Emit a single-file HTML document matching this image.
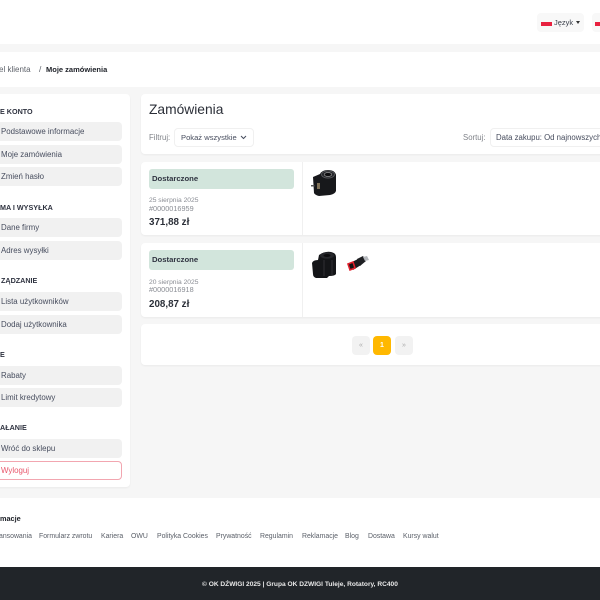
<!DOCTYPE html>
<html lang="pl">
<head>
<meta charset="utf-8">
<title>Zamówienia</title>
<style>
html,body{margin:0;padding:0;width:600px;height:600px;overflow:hidden;background:#f6f6f6;font-family:"Liberation Sans","DejaVu Sans",sans-serif;color:#2b2f38}
.a{position:absolute;box-sizing:border-box}
.t{position:absolute;white-space:nowrap;line-height:1}
.w{background:#fff}
.card{position:absolute;background:#fff;border-radius:4px;box-shadow:0 1px 2px rgba(0,0,0,.05)}
.item{position:absolute;box-sizing:border-box;left:-8px;width:130px;height:19px;background:#f1f1f1;border-radius:4px;font-size:7.9px;line-height:19px;padding-left:9px;color:#474d5e;white-space:nowrap}
.h{position:absolute;white-space:nowrap;font-size:7.2px;font-weight:bold;color:#2f3340;line-height:1}
.f{position:absolute;top:534px;font-size:6.9px;line-height:1;color:#5a5f68;white-space:nowrap}
.status{position:absolute;left:149px;width:145px;height:20px;background:#d2e5dc;border-radius:3px;font-size:7.7px;font-weight:bold;line-height:20px;padding-left:3px;color:#2f3340;box-sizing:border-box}
.g{position:absolute;left:149px;font-size:6.7px;color:#8a8d94;line-height:1;white-space:nowrap}
.n{font-size:7.3px}
.p{position:absolute;left:149px;font-size:9.8px;font-weight:bold;color:#2b2f38;line-height:1;white-space:nowrap}
.box{position:absolute;background:#fff;border:1px solid #f0f0f0;border-radius:4px;box-sizing:border-box;color:#474d5e;white-space:nowrap}
.pg{position:absolute;top:336px;width:18px;height:19px;border-radius:4px;background:#f2f2f2;color:#aaa;font-size:7px;line-height:19px;text-align:center}
.flag{position:absolute;width:11px;height:4px;background:#e8213f}
.lang{position:absolute;top:13px;height:19px;background:#f8f8f8;border-radius:4px}
svg{filter:blur(.3px)}
</style>
</head>
<body>
<!-- header -->
<div class="a w" style="left:0;top:0;width:600px;height:44px"></div>
<div class="lang" style="left:537px;width:47px"></div>
<div class="flag" style="left:541px;top:22px"></div>
<div class="t" style="left:554px;top:19px;font-size:7.5px;color:#3a3f4a">Język</div>
<div class="a" style="left:576px;top:21px;width:0;height:0;border-left:2.5px solid transparent;border-right:2.5px solid transparent;border-top:3px solid #333"></div>
<div class="lang" style="left:592px;width:20px"></div>
<div class="flag" style="left:595px;top:22px"></div>

<!-- breadcrumb -->
<div class="a w" style="left:0;top:52px;width:600px;height:35px"></div>
<div class="t" style="left:-1px;top:66px;font-size:8px;color:#5f636b">el klienta</div>
<div class="t" style="left:39px;top:65px;font-size:8.4px;color:#5f636b">/</div>
<div class="t" style="left:46px;top:65.5px;font-size:7.5px;font-weight:bold;color:#20232a">Moje zamówienia</div>

<!-- sidebar -->
<div class="card" style="left:-8px;top:94px;width:138px;height:393px"></div>
<div class="h" style="left:0;top:108px">E KONTO</div>
<div class="item" style="top:122px">Podstawowe informacje</div>
<div class="item" style="top:145px">Moje zamówienia</div>
<div class="item" style="top:167px">Zmień hasło</div>
<div class="h" style="left:0;top:204px">MA I WYSYŁKA</div>
<div class="item" style="top:218px">Dane firmy</div>
<div class="item" style="top:241px">Adres wysyłki</div>
<div class="h" style="left:1px;top:277px">ZĄDZANIE</div>
<div class="item" style="top:292px">Lista użytkowników</div>
<div class="item" style="top:315px">Dodaj użytkownika</div>
<div class="h" style="left:0;top:351px">E</div>
<div class="item" style="top:366px">Rabaty</div>
<div class="item" style="top:388px">Limit kredytowy</div>
<div class="h" style="left:0;top:424px">AŁANIE</div>
<div class="item" style="top:439px">Wróć do sklepu</div>
<div class="item" style="top:461px;background:#fff;border:1px solid #f2a6b0;color:#e8566b;line-height:17px;padding-left:8px">Wyloguj</div>

<!-- title card -->
<div class="card" style="left:141px;top:94px;width:470px;height:60px"></div>
<div class="t" style="left:149px;top:103px;font-size:13.8px;color:#2b2f38">Zamówienia</div>
<div class="t" style="left:149px;top:134px;font-size:7.8px;color:#808389">Filtruj:</div>
<div class="box" style="left:174px;top:128px;width:80px;height:19px;line-height:17px;padding-left:6px;font-size:7.6px">Pokaż wszystkie</div>
<svg class="a" style="left:240px;top:135px" width="7" height="5" viewBox="0 0 7 5"><path d="M1 1l2.5 2.5L6 1" fill="none" stroke="#474d5e" stroke-width="1"/></svg>
<div class="t" style="left:463px;top:134px;font-size:7.8px;color:#808389">Sortuj:</div>
<div class="box" style="left:490px;top:128px;width:130px;height:19px;line-height:17px;padding-left:5px;font-size:7.8px">Data zakupu: Od najnowszych</div>

<!-- order 1 -->
<div class="card" style="left:141px;top:162px;width:470px;height:73px"></div>
<div class="a" style="left:302px;top:162px;width:1px;height:73px;background:#f0f0f0"></div>
<div class="status" style="top:169px">Dostarczone</div>
<div class="g" style="top:198px">25 sierpnia 2025</div>
<div class="g n" style="top:204.5px">#0000016959</div>
<div class="p" style="top:217.5px">371,88 zł</div>
<svg class="a" style="left:310px;top:168px" width="28" height="30" viewBox="0 0 28 30">
<path d="M3 9 L10 6 Q12 2 18 2 Q25 2 26 7 L26 23 Q25 26 20 27 L9 28 Q5 27 4 25Z" fill="#17181b"/>
<ellipse cx="18" cy="6.5" rx="6.5" ry="3.6" fill="#26272b" stroke="#5b5c60" stroke-width=".8"/>
<ellipse cx="18" cy="6.5" rx="3.8" ry="1.9" fill="#0d0d0f" stroke="#a8a8a8" stroke-width=".6"/>
<rect x="1" y="17" width="3.5" height="1.5" fill="#555"/>
<rect x="7" y="15" width="3" height="6" fill="#7d6f56"/>
</svg>

<!-- order 2 -->
<div class="card" style="left:141px;top:243px;width:470px;height:74px"></div>
<div class="a" style="left:302px;top:243px;width:1px;height:74px;background:#f0f0f0"></div>
<div class="status" style="top:250px">Dostarczone</div>
<div class="g" style="top:279.5px">20 sierpnia 2025</div>
<div class="g n" style="top:285.5px">#0000016918</div>
<div class="p" style="top:299.5px">208,87 zł</div>
<svg class="a" style="left:311px;top:250px" width="26" height="29" viewBox="0 0 26 29">
<path d="M8 5 Q14 1 20 2 Q25 3 25 7 L25 24 Q24 26 18 26 L16 28 L5 28 Q2 27 2 24 L1 13 Q2 10 7 10Z" fill="#141518"/>
<ellipse cx="16" cy="5.5" rx="7" ry="3.2" fill="#26272b"/>
<ellipse cx="16" cy="5.5" rx="3.5" ry="1.5" fill="#0c0c0e"/>
<path d="M13 10 V26 M21 10 V25" stroke="#2f3034" stroke-width="1"/>
</svg>
<svg class="a" style="left:346px;top:254px" width="24" height="20" viewBox="0 0 24 20">
<path d="M11 5 L17 2 L20 7 L14 12Z" fill="#1f2023"/>
<path d="M17 3 L21 2 L23 6 L19 7Z" fill="#b5b8bd"/>
<path d="M4 9 L12 5 L15 11 L7 16Z" fill="#1a1b1e"/>
<path d="M2 10 L7 8 L9 14 L4 16Z" fill="#141414" stroke="#e0202c" stroke-width="1.6"/>
</svg>

<!-- pagination -->
<div class="card" style="left:141px;top:324px;width:470px;height:41px"></div>
<div class="pg" style="left:352px">«</div>
<div class="pg" style="left:373px;background:#ffb800;color:#fff;font-weight:bold">1</div>
<div class="pg" style="left:395px">»</div>

<!-- footer -->
<div class="a w" style="left:0;top:498px;width:600px;height:69px"></div>
<div class="t" style="left:0;top:515px;font-size:7.3px;font-weight:bold;color:#20232a">macje</div>
<div class="f" style="left:-1px">ansowania</div>
<div class="f" style="left:39px">Formularz zwrotu</div>
<div class="f" style="left:101px">Kariera</div>
<div class="f" style="left:131px">OWU</div>
<div class="f" style="left:157px">Polityka Cookies</div>
<div class="f" style="left:216px">Prywatność</div>
<div class="f" style="left:260px">Regulamin</div>
<div class="f" style="left:302px">Reklamacje</div>
<div class="f" style="left:345px">Blog</div>
<div class="f" style="left:368px">Dostawa</div>
<div class="f" style="left:403px">Kursy walut</div>
<div class="a" style="left:0;top:567px;width:600px;height:33px;background:#212529"></div>
<div class="t" style="left:202px;top:582px;font-size:6.6px;font-weight:bold;color:#e8e8e8">© OK DŹWIGI 2025 | Grupa OK DZWIGI Tuleje, Rotatory, RC400</div>
</body>
</html>
